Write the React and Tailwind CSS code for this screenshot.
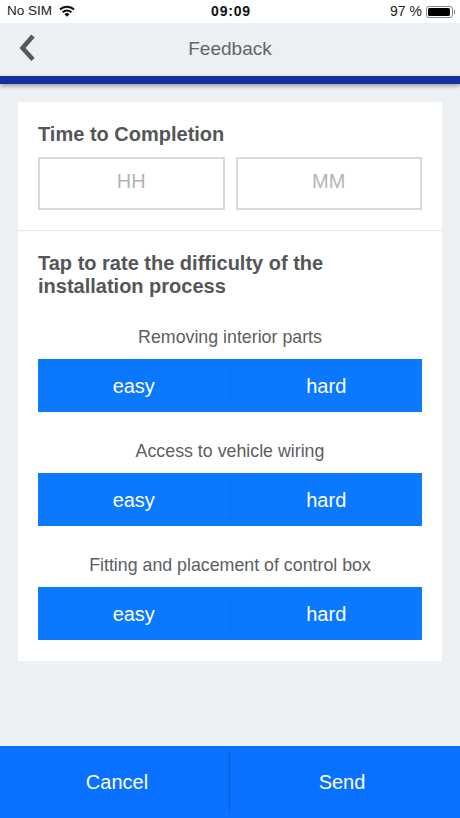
const font = "font-['Liberation_Sans',Arial,sans-serif]";

function Rating({ label }) {
  return (
    <div>
      <div className="text-center text-[17.8px] leading-[20px] text-[#5c5e60] mb-[12px]">{label}</div>
      <div className="flex h-[53px] bg-[#0a78ff] items-center text-white text-[20px]">
        <div className="flex-1 flex items-center justify-center">easy</div>
        <div className="w-px h-[36px] bg-[#0a6fe8]" />
        <div className="flex-1 flex items-center justify-center">hard</div>
      </div>
    </div>
  );
}

export default function App() {
  return (
    <div className={`${font} w-[460px] h-[818px] bg-[#ecf0f3] flex flex-col overflow-hidden`}>
      <div className="h-[23px] bg-white flex items-center justify-between pl-[7px] pr-[5px] text-[13.5px] text-[#222]">
        <div className="flex items-center gap-[7px] w-[150px]">
          <span>No SIM</span>
          <svg className="mb-[2px]" width="16" height="12" viewBox="0 0 16 12" fill="none" stroke="#111" strokeWidth="2">
            <path d="M1 4.500a10 10 0 0 1 14 0" />
            <path d="M3.600 7.200a6.300 6.300 0 0 1 8.800 0" />
            <path d="M5.500 9.300 8 11.700l2.500-2.400a3.500 3.500 0 0 0-5 0z" fill="#111" stroke="none" />
          </svg>
        </div>
        <span className="font-bold text-[14px] tracking-[0.8px] text-[#111]">09:09</span>
        <div className="flex items-center justify-end gap-[4px] w-[150px]">
          <span className="text-[14px]">97 %</span>
          <div className="flex items-center">
            <div className="w-[27px] h-[12px] rounded-[3px] border border-[#888] p-px">
              <div className="w-[22px] h-full rounded-[1.500px] bg-black" />
            </div>
            <div className="w-px h-[4px] bg-[#888] ml-px" />
          </div>
        </div>
      </div>

      <div className="h-[53px] flex items-center justify-center relative text-[19px] text-[#636669]">
        <svg className="absolute left-[18px] top-[10px]" width="18" height="30" viewBox="0 0 18 30" fill="none">
          <path d="M15 3 L4.500 15 L15 26.500" stroke="#55595c" strokeWidth="4.500" />
        </svg>
        Feedback
      </div>
      <div className="h-[8px] bg-[#1430a0] shadow-[0_2px_4px_rgba(0,0,0,0.35)]" />

      <div className="mt-[18px] mx-[18px] bg-white h-[559px] text-[#545658]">
        <div className="px-[20px] pt-[21px] h-[129px] border-b border-[#e6e8ea]">
          <div className="font-bold text-[20px] leading-[22px] mb-[12px]">Time to Completion</div>
          <div className="flex gap-[11px]">
            <div className="flex-1 h-[53px] border-2 border-[#dadada] flex items-center justify-center text-[20px] text-[#b4b4b4] pb-[6px]">HH</div>
            <div className="flex-1 h-[53px] border-2 border-[#dadada] flex items-center justify-center text-[20px] text-[#b4b4b4] pb-[6px]">MM</div>
          </div>
        </div>
        <div className="px-[20px] pt-[21px]">
          <div className="font-bold text-[20px] leading-[23px] mb-[29px]">
            Tap to rate the difficulty of the
            <br />
            installation process
          </div>
          <div className="flex flex-col gap-[29px]">
            <Rating label="Removing interior parts" />
            <Rating label="Access to vehicle wiring" />
            <Rating label="Fitting and placement of control box" />
          </div>
        </div>
      </div>

      <div className="mt-auto h-[72px] bg-[#0a70ff] flex items-center text-white text-[20px]">
        <div className="w-[229px] flex items-center justify-center pl-[5px]">Cancel</div>
        <div className="w-px h-[60px] bg-[#0f62c4]" />
        <div className="flex-1 flex items-center justify-center pr-[6px]">Send</div>
      </div>
    </div>
  );
}
